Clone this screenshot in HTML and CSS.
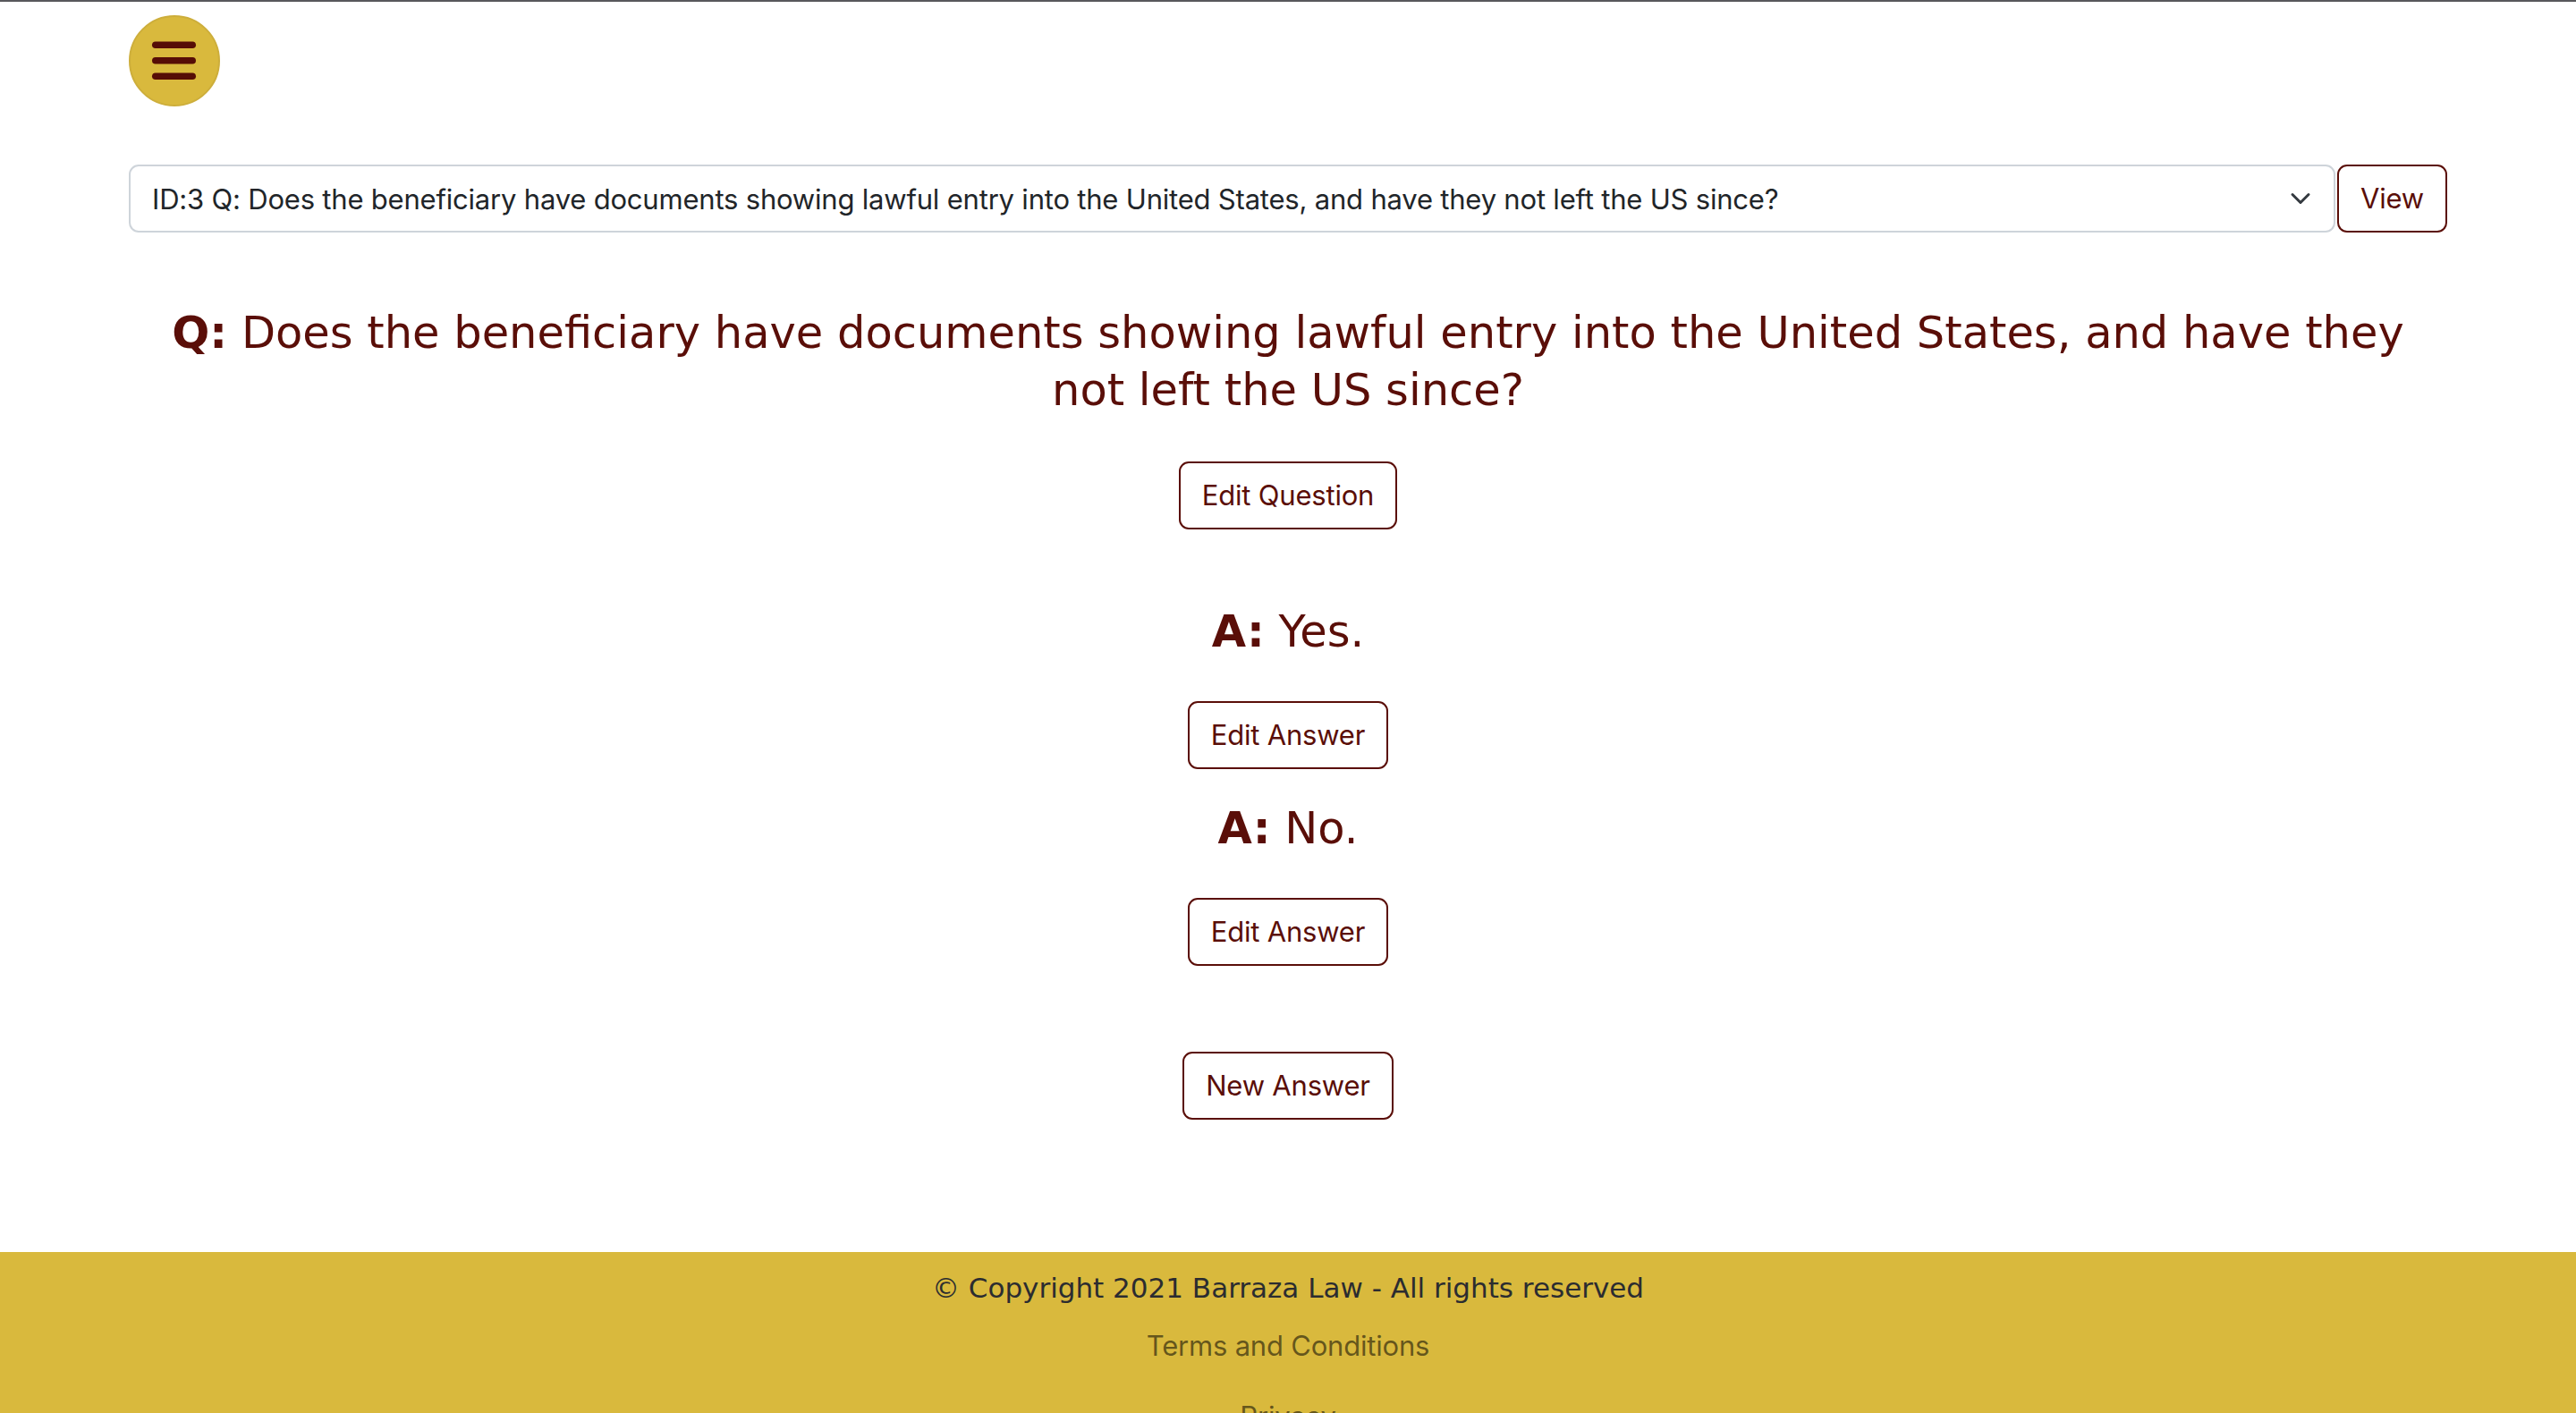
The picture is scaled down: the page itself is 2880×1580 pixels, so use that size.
FILE: index.html
```html
<!DOCTYPE html>
<html lang="en">
<head>
<meta charset="utf-8">
<title>Question</title>
<link rel="stylesheet" href="styles.css">
</head>
<body>
<div class="topline"></div>
<header class="container header">
  <button class="menu-btn" aria-label="Menu">
    <svg width="102" height="102" viewBox="0 0 102 102">
      <rect x="26" y="29.5" width="49" height="7.6" rx="3.8" fill="#560d06"/>
      <rect x="26" y="47" width="49" height="7.6" rx="3.8" fill="#560d06"/>
      <rect x="26" y="64.5" width="49" height="7.6" rx="3.8" fill="#560d06"/>
    </svg>
  </button>
</header>
<main class="container">
  <form class="picker">
    <div class="select">
      <span class="select-text">ID:3 Q: Does the beneficiary have documents showing lawful entry into the United States, and have they not left the US since?</span>
      <svg class="chev" width="24" height="24" viewBox="0 0 16 16"><path d="m2 5 6 6 6-6" fill="none" stroke="#343a40" stroke-width="2" stroke-linecap="round" stroke-linejoin="round"/></svg>
    </div>
    <button type="button" class="btn">View</button>
  </form>

  <section class="question">
    <h2 class="qa q-title"><b>Q:</b> Does the beneficiary have documents showing lawful entry into the United States, and have they not left the US since?</h2>
    <button type="button" class="btn btn-q">Edit Question</button>
  </section>

  <section class="answers">
    <div class="answer first">
      <h3 class="qa"><b>A:</b> Yes.</h3>
      <button type="button" class="btn btn-a">Edit Answer</button>
    </div>
    <div class="answer">
      <h3 class="qa"><b>A:</b> No.</h3>
      <button type="button" class="btn btn-a">Edit Answer</button>
    </div>
  </section>

  <div class="new-answer">
    <button type="button" class="btn">New Answer</button>
  </div>
</main>
<footer class="footer">
  <p class="copy">© Copyright 2021 Barraza Law - All rights reserved</p>
  <ul class="links">
    <li><a href="#">Terms and Conditions</a></li>
    <li><a href="#">Privacy</a></li>
  </ul>
</footer>
</body>
</html>
```
FILE: styles.css
```css
* { box-sizing: border-box; }

html, body {
  margin: 0;
  padding: 0;
  background: #ffffff;
}

body {
  font-family: "Inter", "Roboto", sans-serif;
  color: #212529;
}

.topline {
  height: 2px;
  background: #58585c;
}

.container {
  width: 2592px;
  margin: 0 auto;
}

.header {
  padding-top: 15px;
}

.menu-btn {
  display: block;
  width: 102px;
  height: 102px;
  padding: 0;
  border: 2px solid #cdae3b;
  border-radius: 50%;
  background: #d9b93d;
  cursor: pointer;
  position: relative;
}

.menu-btn svg {
  position: absolute;
  left: -2px;
  top: -2px;
}

.picker {
  margin-top: 65px;
  display: flex;
  gap: 2px;
}

.select {
  flex: 1;
  height: 76px;
  border: 2px solid #ced4da;
  border-radius: 11px;
  display: flex;
  align-items: center;
  padding: 0 25px 0 24px;
  font-size: 31px;
  letter-spacing: -0.2px;
  color: #212529;
}

.select-text {
  flex: 1;
  white-space: nowrap;
  overflow: hidden;
}

.chev {
  flex: none;
}

.btn {
  font-family: "Inter", "Roboto", sans-serif;
  font-size: 31px;
  letter-spacing: -0.2px;
  line-height: 48px;
  padding: 12px 24px;
  height: 76px;
  border: 2px solid #5a0e08;
  border-radius: 11px;
  background: #ffffff;
  color: #5a0e08;
  cursor: pointer;
}

.qa {
  font-family: "DejaVu Sans", sans-serif;
  font-weight: normal;
  font-size: 49.5px;
  line-height: 64px;
  letter-spacing: 0;
  color: #5a0e08;
  text-align: center;
  margin: 0;
}

.q-title {
  max-width: 2560px;
}

.qa b {
  font-weight: bold;
}

.question {
  display: flex;
  flex-direction: column;
  align-items: center;
  margin-top: 80px;
}

.btn-q {
  margin-top: 48px;
}

.answers {
  display: flex;
  flex-direction: column;
  align-items: center;
}

.answer {
  display: flex;
  flex-direction: column;
  align-items: center;
  margin-top: 34px;
}

.answer.first {
  margin-top: 82px;
}

.btn-a {
  margin-top: 46px;
}

.new-answer {
  display: flex;
  justify-content: center;
  margin-top: 96px;
}

.footer {
  margin-top: 148px;
  background: #d9b93d;
  padding: 16px 0 40px;
  text-align: center;
}

.copy {
  margin: 0;
  font-family: "DejaVu Sans", sans-serif;
  font-size: 31px;
  line-height: 48px;
  color: #2b2c30;
}

.links {
  list-style: none;
  margin: 17px 0 0;
  padding: 0;
  display: flex;
  flex-direction: column;
  gap: 31px;
}

.links a {
  font-family: "Inter", "Roboto", sans-serif;
  font-size: 31px;
  line-height: 48px;
  letter-spacing: -0.2px;
  color: rgba(0, 0, 0, 0.55);
  text-decoration: none;
}
```
